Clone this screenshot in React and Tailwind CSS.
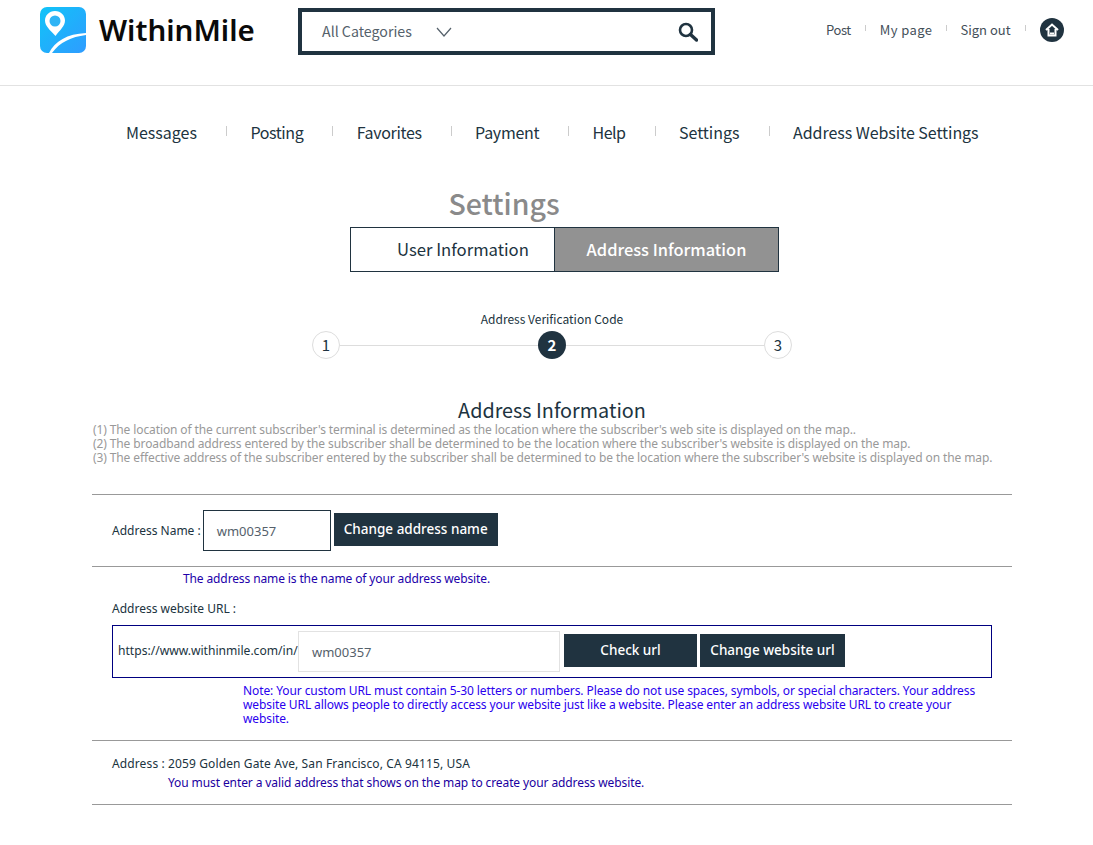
import React from "react";

const font = { fontFamily: '"Noto Sans CJK KR", "Noto Sans", sans-serif' };
const small = { fontFamily: '"Noto Sans", "Noto Sans CJK KR", sans-serif' };

function Logo() {
  return (
    <svg width="46" height="46" viewBox="0 0 46 46">
      <defs>
        <linearGradient id="lg" x1="0" y1="0" x2="1" y2="1">
          <stop offset="0" stopColor="#10c4f8" />
          <stop offset="1" stopColor="#2f9cff" />
        </linearGradient>
      </defs>
      <rect width="46" height="46" rx="7" fill="url(#lg)" />
      <path d="M15 4C9 4 5 8.500 5 13.500C5 19 10 23 15.500 29C20 23 25 19 25 13.500C25 8.500 21 4 15 4Z" fill="#fff" />
      <circle cx="15" cy="14" r="5.500" fill="#2fb4f5" />
      <path d="M9 46C15 34 27 27 46 26V28C31 30 20 35 12 46Z" fill="#fff" />
    </svg>
  );
}

function Sep({ className = "h-3" }) {
  return <span className={`w-px bg-[#cccccc] ${className}`} />;
}

function TopLink({ className = "", children }) {
  return <a className={`text-[13px] text-[#444f59] leading-none -mt-[2px] ${className}`}>{children}</a>;
}

function Step({ n, active }) {
  return (
    <div
      className={`w-7 h-7 rounded-full flex items-center justify-center text-[15px] shrink-0 ${
        active ? "bg-[#203340] text-white font-semibold" : "bg-white border border-[#dddddd] text-[#203340]"
      }`}
    >
      {n}
    </div>
  );
}

function DarkButton({ className = "", children }) {
  return (
    <button className={`h-[33px] -mt-[2px] bg-[#203340] text-white text-[13.500px] font-medium flex items-center justify-center shrink-0 ${className}`}>
      {children}
    </button>
  );
}

export default function App() {
  const nav = [
    ["Messages", ""],
    ["Posting", "tracking-[-0.4px]"],
    ["Favorites", "tracking-[-0.33px]"],
    ["Payment", "tracking-[-0.3px]"],
    ["Help", "tracking-[-0.5px]"],
    ["Settings", ""],
    ["Address Website Settings", "tracking-[-0.04px]"],
  ];

  return (
    <div className="min-h-[845px] bg-white text-[#203340]" style={font}>
      {/* Header */}
      <header className="h-[86px] border-b border-[#e2e2e2] flex items-start relative">
        <div className="ml-10 mt-[7px] flex items-center gap-[13px] w-[258px] shrink-0">
          <Logo />
          <span className="text-[29.500px] font-semibold text-[#0a0a0a] leading-none" style={small}>WithinMile</span>
        </div>
        <div className="mt-2 w-[417px] h-[47px] border-4 border-[#203340] flex items-center shrink-0 pl-5 pr-[13px]">
          <span className="text-[14.200px] text-[#55616b]">All Categories</span>
          <svg className="ml-6" width="16" height="10" viewBox="0 0 16 10" fill="none" stroke="#55616b" strokeWidth="1.200">
            <path d="M1 1L8 9L15 1" />
          </svg>
          <svg className="ml-auto" width="20" height="20" viewBox="0 0 20 20" fill="none" stroke="#203340">
            <circle cx="8" cy="8" r="6" strokeWidth="2.600" />
            <path d="M12.500 12.500L18.500 18" strokeWidth="3.400" strokeLinecap="round" />
          </svg>
        </div>
        <div className="ml-[111px] mt-[18px] flex items-center">
          <TopLink className="tracking-[-0.4px]">Post</TopLink>
          <Sep className="h-[6px] mx-[14px] -mt-1" />
          <TopLink className="tracking-[0.4px]">My page</TopLink>
          <Sep className="h-[6px] ml-[14px] mr-[13px] -mt-1" />
          <TopLink>Sign out</TopLink>
          <Sep className="h-[6px] mx-[14px] -mt-1" />
          <div className="w-6 h-6 rounded-full bg-[#203340] flex items-center justify-center">
            <svg width="16" height="16" viewBox="0 0 16 16" fill="none" stroke="#fff" strokeWidth="2">
              <path d="M2 8L8 2.500L14 8M4.500 7V13.500H11.500V7" />
              <path d="M6 11.500H10" />
            </svg>
          </div>
        </div>
      </header>

      {/* Menu */}
      <nav className="mt-[34px] ml-[126px] flex items-center h-[24px]">
        {nav.map(([item, spacing], i) => (
          <React.Fragment key={item}>
            {i > 0 && <Sep className="h-[10px] ml-[29px] mr-[23.400px] -mt-[3px]" />}
            <a className={`text-base text-[#203340] whitespace-nowrap ${spacing}`}>{item}</a>
          </React.Fragment>
        ))}
      </nav>

      {/* Title + tabs */}
      <div className="mt-[41px] flex justify-center pr-[85px]">
        <h1 className="text-[28.500px] font-medium text-[#8a8a8a] leading-[36px]">Settings</h1>
      </div>
      <div className="ml-[350px] mt-[6px] w-[429px] h-[45px] flex border border-[#203340]">
        <div className="w-[204px] pl-[46px] flex items-center text-[16.700px] text-[#203340] border-r border-[#203340]">User Information</div>
        <div className="flex-1 flex items-center justify-center bg-[#929292] text-white text-[16.400px] font-medium">Address Information</div>
      </div>

      {/* Steps */}
      <div className="mt-[39px] ml-[312px] w-[480px]">
        <p className="text-center text-xs leading-4 text-[#203340]">Address Verification Code</p>
        <div className="mt-1 flex items-center">
          <Step n="1" />
          <span className="flex-1 h-px bg-[#dddddd]" />
          <Step n="2" active />
          <span className="flex-1 h-px bg-[#dddddd]" />
          <Step n="3" />
        </div>
      </div>

      {/* Address information */}
      <section className="mx-[92px] w-[920px]" style={small}>
        <h2 className="mt-[42px] mb-1 text-center text-[19.800px] leading-[18px] text-[#203340]" style={font}>Address Information</h2>
        <div className="ml-px text-xs leading-[14px] tracking-[-0.11px] text-[#999999] whitespace-nowrap">
          <p>(1) The location of the current subscriber's terminal is determined as the location where the subscriber's web site is displayed on the map..</p>
          <p>(2) The broadband address entered by the subscriber shall be determined to be the location where the subscriber's website is displayed on the map.</p>
          <p>(3) The effective address of the subscriber entered by the subscriber shall be determined to be the location where the subscriber's website is displayed on the map.</p>
        </div>

        <div className="mt-[29px] border-t border-[#999999] h-[73px] pl-5 flex items-center border-b">
          <span className="text-xs text-[#203340] whitespace-nowrap">Address Name :</span>
          <div className="ml-[2px] w-[128px] h-[41px] border border-[#203340] pl-[13px] pt-[2px] flex items-center text-[13px] text-[#55616b]">wm00357</div>
          <DarkButton className="ml-[3px] w-[164px]">Change address name</DarkButton>
        </div>

        <p className="ml-[91px] mt-[4px] text-xs leading-4 tracking-[-0.12px] text-[#2200aa]">The address name is the name of your address website.</p>
        <p className="ml-5 mt-[14px] text-xs leading-4 text-[#203340]">Address website URL :</p>

        <div className="ml-5 mt-[8px] w-[880px] h-[53px] border border-[#000080] flex items-center pl-[5px]">
          <span className="text-[12.100px] text-[#203340] w-[180px] whitespace-nowrap shrink-0">https://www.withinmile.com/in/</span>
          <div className="w-[262px] h-[41px] border border-[#e2e2e2] pl-[13px] pt-[2px] flex items-center text-[13px] text-[#55616b] shrink-0">wm00357</div>
          <DarkButton className="ml-1 w-[133px]">Check url</DarkButton>
          <DarkButton className="ml-[3px] w-[145px]">Change website url</DarkButton>
        </div>

        <p className="ml-[151px] mt-[6px] w-[745px] text-xs leading-[14px] tracking-[-0.1px] text-[#2a00ee]">
          Note: Your custom URL must contain 5-30 letters or numbers. Please do not use spaces, symbols, or special characters. Your address website URL allows people to directly access your website just like a website. Please enter an address website URL to create your website.
        </p>

        <div className="mt-[14px] border-t border-b border-[#999999] h-[65px] pl-5 pt-[15px]">
          <p className="text-xs leading-4 tracking-[0.12px] text-[#203340]">Address : 2059 Golden Gate Ave, San Francisco, CA 94115, USA</p>
          <p className="ml-[56px] mt-[3px] text-xs leading-4 tracking-[-0.1px] text-[#1a00a0]">You must enter a valid address that shows on the map to create your address website.</p>
        </div>
      </section>
    </div>
  );
}
